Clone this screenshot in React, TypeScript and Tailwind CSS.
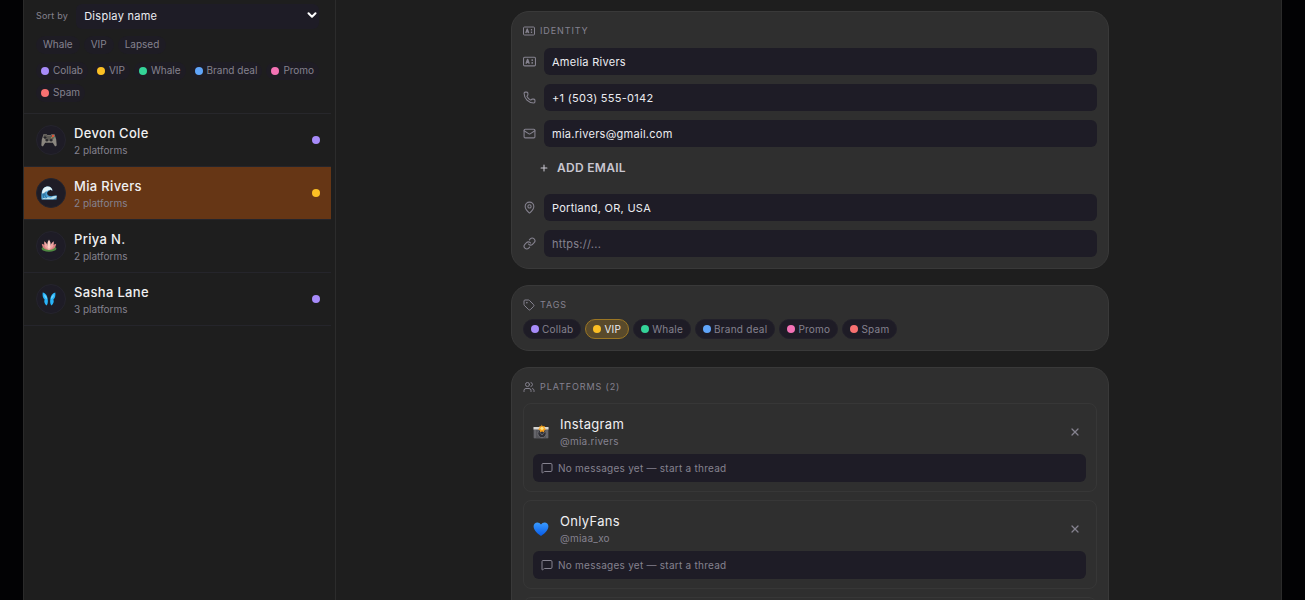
import type { ReactNode } from "react";
import clsx from "clsx";
import { ChevronDown, Link, Mail, MapPin, MessageSquare, Phone, Plus, Tag, Users, X } from "lucide-react";

const TAGS = [
  { name: "Collab", dot: "bg-[#a78bfa]" },
  { name: "VIP", dot: "bg-[#fbbf24]" },
  { name: "Whale", dot: "bg-[#34d399]" },
  { name: "Brand deal", dot: "bg-[#60a5fa]" },
  { name: "Promo", dot: "bg-[#f472b6]" },
  { name: "Spam", dot: "bg-[#f87171]" },
];

const CONTACTS = [
  { name: "Devon Cole", platforms: 2, icon: <GamepadIcon />, dot: "bg-[#a78bfa]" },
  { name: "Mia Rivers", platforms: 2, icon: <WaveIcon />, dot: "bg-[#fbbf24]", active: true },
  { name: "Priya N.", platforms: 2, icon: <LotusIcon /> },
  { name: "Sasha Lane", platforms: 3, icon: <ButterflyIcon />, dot: "bg-[#a78bfa]" },
];

const PLATFORMS = [
  { name: "Instagram", handle: "@mia.rivers", icon: <CameraIcon /> },
  { name: "OnlyFans", handle: "@miaa_xo", icon: <HeartIcon /> },
];

function GamepadIcon() {
  return (
    <svg viewBox="0 0 16 16" className="h-4 w-4" aria-hidden="true">
      <path d="M2.5 2.2h3l.8.8h3.4l.8-.8h3l1.7 5.3.5 6-1.6.9-2.3-3.7H4.2l-2.3 3.7-1.6-.9.5-6z" fill="#8a867f" />
      <path d="M3 2.4h2.7l.7 1.2h3.2l.7-1.2H13l.8 2-2.5 4H4.7l-2.5-4z" fill="#5c5954" />
      <path d="M4 4v3M2.5 5.5h3" stroke="#252429" strokeWidth="1" />
      <circle cx="12" cy="4" r="1.2" fill="#e15338" />
      <circle cx="13.2" cy="5.6" r=".7" fill="#4e9b70" />
      <circle cx="10.7" cy="5.6" r=".7" fill="#b58b45" />
      <circle cx="5.9" cy="8.2" r="1.3" fill="#29282c" />
      <circle cx="10.1" cy="8.2" r="1.3" fill="#29282c" />
    </svg>
  );
}

function WaveIcon() {
  return (
    <svg viewBox="0 0 16 16" className="h-4 w-4" aria-hidden="true">
      <path d="M.5 14.5C-.2 8 1 2.2 6 1.5c3.3-.4 5 1.6 5.5 4L9.3 4.7 7 6.4c-1.7 1.5-.8 4.2 2 4.7 2.3.4 4.6-1 6.6-.9v4.3z" fill="#4c9fd1" />
      <path d="M1 8.5C1.3 4.5 3 1.8 6 1.5c3.3-.4 5 1.6 5.5 4l-1.2-.2-1-.9-1.2 1.2-1-.5-.9 1.4-1.5-.3-.7 2z" fill="#e4f3f7" />
      <path d="M4.2 7.2c-1 2.2-.2 4.3 1.6 5.3M2.3 8.5c-.5 2 .1 4 1.3 5.2" stroke="#21648f" fill="none" />
      <path d="M1 14.3c1-1.5 2.5-1.8 4-.9 1.7-1.8 3.4-1.3 4.6-.6 1.7-1.4 3.6-1.8 6-1.8v1.3l-3.3 2z" fill="#b9dfec" />
    </svg>
  );
}

function LotusIcon() {
  return (
    <svg viewBox="0 0 16 16" className="h-4 w-4" aria-hidden="true">
      <ellipse cx="8" cy="10.7" rx="7.4" ry="3" fill="#4f8a42" />
      <path d="M.8 5.7c2.9.6 5.2 2.6 7.2 5.8 2-3.2 4.3-5.2 7.2-5.8-.5 4-2.8 6.2-7.2 6.2S1.3 9.7.8 5.7z" fill="#d88082" />
      <path d="M3.3 3.2c2.5 1.8 4 4.5 4.7 8.5.7-4 2.2-6.7 4.7-8.5.5 4.3-.8 7.2-4.7 8.7-3.9-1.5-5.2-4.4-4.7-8.7z" fill="#f0a4a2" />
      <path d="M8 1.5c2.3 3.3 2.3 7 0 10.4-2.3-3.4-2.3-7.1 0-10.4z" fill="#ffd0c7" />
    </svg>
  );
}

function ButterflyIcon() {
  return (
    <svg viewBox="0 0 16 16" className="h-4 w-4" aria-hidden="true">
      <path
        d="M6.8 9C6.5 4.5 4.5 2 1.7 1.5c-.4 3 .2 5.7 1.9 7.1-.9 2.3.1 4.7 1.9 5.9 1.2-1.2 1.5-3 1.3-5.5zM9.2 9c.3-4.5 2.3-7 5.1-7.5.4 3-.2 5.7-1.9 7.1.9 2.3-.1 4.7-1.9 5.9C9.3 13.3 9 11.5 9.2 9z"
        fill="#28b4fa"
      />
      <path d="M6.3 8C5.7 5.5 4.5 4 3 3.2 3.2 5.8 4.5 7.5 6.3 8zM9.7 8c.6-2.5 1.8-4 3.3-4.8-.2 2.6-1.5 4.3-3.3 4.8z" fill="#6bd5ff" />
      <path d="M8 5.5V12" stroke="#152333" strokeWidth="1" />
    </svg>
  );
}

function CameraIcon() {
  return (
    <svg viewBox="0 0 16 16" className="h-4 w-4" aria-hidden="true">
      <rect x=".5" y="3" width="15" height="11.5" rx="1" fill="#55555a" />
      <path d="M.5 3h15v2.5H.5z" fill="#d6d5d3" />
      <path d="M2 6v8M14 6v8" stroke="#77777b" />
      <circle cx="9" cy="9.5" r="4.2" fill="#303036" stroke="#6e6e73" />
      <path d="m7 8.3 2 2.7 2.5-3" stroke="#65656c" fill="none" />
      <path d="m8.5.5 1.2 1.8 2.1-.4-.4 2.1 1.8 1.2-1.9 1-.2 2.1-2-.8-1.9.8-.3-2.1L5 5.2 6.8 4l-.4-2.1 2 .4z" fill="#f59e1b" />
      <circle cx="9" cy="4.3" r="1.6" fill="#ffe27a" />
    </svg>
  );
}

function HeartIcon() {
  return (
    <svg viewBox="0 0 16 16" className="h-4 w-4" aria-hidden="true">
      <defs>
        <linearGradient id="heart" x2="0" y2="1">
          <stop stopColor="#3a9bff" />
          <stop offset="1" stopColor="#075be8" />
        </linearGradient>
      </defs>
      <path d="M8 15C3.5 12 .6 8.7.6 5.3c0-4.3 5.4-5.3 7.4-1.7 2-3.6 7.4-2.6 7.4 1.7C15.4 8.7 12.5 12 8 15z" fill="url(#heart)" />
    </svg>
  );
}

function IdCardIcon({ className }: { className: string }) {
  return (
    <svg viewBox="0 0 24 24" fill="none" stroke="currentColor" strokeWidth="2" strokeLinejoin="round" className={className} aria-hidden="true">
      <rect x="1" y="4" width="22" height="16" rx="2" />
      <path d="m5.5 16 3-8 3 8M7 13.5h3.5" strokeWidth="2.5" />
      <path d="M17 8v3M17 13v3" strokeWidth="2.5" />
    </svg>
  );
}

function Card({ icon, title, children }: { icon: ReactNode; title: string; children: ReactNode }) {
  return (
    <section className="rounded-[18px] border border-[#393939] bg-[#2f2f2f] p-[11px]">
      <h2 className="flex h-4 items-center gap-[5px] text-[9px] tracking-widest text-[#85828f] uppercase">
        {icon}
        {title}
      </h2>
      {children}
    </section>
  );
}

function Field({ icon, label, value, placeholder, type = "text" }: {
  icon: ReactNode;
  label: string;
  value?: string;
  placeholder?: string;
  type?: string;
}) {
  return (
    <label className="flex items-center gap-2 text-[#85828f]">
      {icon}
      <input
        type={type}
        aria-label={label}
        defaultValue={value}
        placeholder={placeholder}
        className="h-[27px] min-w-0 flex-1 rounded-md bg-[#1e1c26] px-2 text-[11px] tracking-wide text-[#ececf1] outline-none placeholder:text-[#85828f]"
      />
    </label>
  );
}

function Sidebar() {
  return (
    <aside className="w-[312px] shrink-0 border-r border-[#2c2c2c] pr-1">
      <div className="border-b border-[#27272b] pt-0.5 pr-2 pb-[11px] pl-3">
        <div className="flex items-center gap-2 pr-1">
          <label htmlFor="sort" className="text-[9px] tracking-wide text-[#85828f]">Sort by</label>
          <div className="relative flex-1">
            <select id="sort" className="h-[25px] w-full appearance-none rounded-md bg-[#1e1c26] px-2 text-[11px] tracking-wide text-[#ececf1] outline-none">
              <option>Display name</option>
            </select>
            <ChevronDown className="pointer-events-none absolute top-1.5 right-0 h-3.5 w-3.5 text-white" strokeWidth={3.5} />
          </div>
        </div>
        <div className="mt-[7px] flex gap-1">
          {["Whale", "VIP", "Lapsed"].map((segment) => (
            <button key={segment} type="button" className="h-[18px] rounded-full bg-[#1e1c24] px-[7px] text-[10px] text-[#85828f]">
              {segment}
            </button>
          ))}
        </div>
        <div className="mt-2 flex flex-wrap gap-1">
          {TAGS.map((tag) => (
            <button key={tag.name} type="button" className="flex h-[18px] items-center gap-1 rounded-full bg-[#1e1c24] px-[5px] text-[10px] text-[#85828f]">
              <span className={clsx("h-2 w-2 rounded-full", tag.dot)} />
              {tag.name}
            </button>
          ))}
        </div>
      </div>
      <ul>
        {CONTACTS.map((contact) => (
          <li key={contact.name} className="border-b border-[#25252b]">
            <button
              type="button"
              className={clsx("flex h-[52px] w-full items-center gap-2 pr-[11px] pl-3 text-left", contact.active && "bg-[#663615]")}
            >
              <span className="flex h-[30px] w-[30px] items-center justify-center rounded-full border border-[#25242d] bg-[#1e1c26] pr-1">
                {contact.icon}
              </span>
              <span className="flex-1 pt-0.5">
                <span className="block text-[13px] leading-[18px] font-medium tracking-wide text-[#f0f0f2]">{contact.name}</span>
                <span className="block text-[10px] leading-4 text-[#85828f]">{contact.platforms} platforms</span>
              </span>
              {contact.dot ? <span className={clsx("h-2 w-2 rounded-full", contact.dot)} /> : null}
            </button>
          </li>
        ))}
      </ul>
    </aside>
  );
}

export default function App() {
  const fieldIcon = "h-[13px] w-[13px] shrink-0";
  const titleIcon = "h-3 w-3 shrink-0";

  return (
    <div className="h-screen overflow-hidden bg-[#020204] px-[23px] font-['Inter',sans-serif]">
      <div className="flex min-h-full border-x border-[#2a2a2a] bg-[#1e1e1e]">
        <Sidebar />
        <main className="min-w-0 flex-1 pt-[11px] pl-[3px]">
          <div className="mx-auto flex max-w-[598px] flex-col gap-4">
            <Card icon={<IdCardIcon className={titleIcon} />} title="Identity">
              <div className="mt-[9px] flex flex-col gap-[9px]">
                <Field icon={<IdCardIcon className={fieldIcon} />} label="Name" value="Amelia Rivers" />
                <Field icon={<Phone className={fieldIcon} />} label="Phone" type="tel" value="+1 (503) 555-0142" />
                <Field icon={<Mail className={fieldIcon} />} label="Email" type="email" value="mia.rivers@gmail.com" />
                <button type="button" className="mb-[5px] ml-4 flex h-6 items-center gap-2 self-start text-[12px] font-semibold tracking-wide text-[#c9c7d1]">
                  <Plus className="h-2.5 w-2.5" strokeWidth={2.5} />
                  ADD EMAIL
                </button>
                <Field icon={<MapPin className={fieldIcon} />} label="Location" value="Portland, OR, USA" />
                <Field icon={<Link className={fieldIcon} />} label="Website" type="url" placeholder="https://..." />
              </div>
            </Card>

            <Card icon={<Tag className={titleIcon} />} title="Tags">
              <div className="mt-1.5 flex flex-wrap gap-1">
                {TAGS.map((tag) => (
                  <button
                    key={tag.name}
                    type="button"
                    className={clsx(
                      "flex h-5 items-center gap-[3px] rounded-full border px-[7px] text-[10px] tracking-wide",
                      tag.name === "VIP" ? "border-[#9b7624] bg-[#594a2b] text-[#ececf1]" : "border-[#22202a] bg-[#1e1c26] text-[#85828f]",
                    )}
                  >
                    <span className={clsx("h-2 w-2 rounded-full", tag.dot)} />
                    {tag.name}
                  </button>
                ))}
              </div>
            </Card>

            <Card icon={<Users className={titleIcon} />} title="Platforms (2)">
              <div className="mt-2 flex flex-col gap-2">
                {PLATFORMS.map((platform) => (
                  <article key={platform.name} className="rounded-lg border border-[#373737] pt-[10px] pr-[10px] pb-[9px] pl-[9px]">
                    <div className="flex items-center gap-[11px]">
                      {platform.icon}
                      <div className="flex-1 pb-0.5">
                        <h3 className="text-[13px] leading-5 tracking-wide text-[#f0f0f2]">{platform.name}</h3>
                        <p className="text-[10px] leading-[14px] tracking-wide text-[#85828f]">{platform.handle}</p>
                      </div>
                      <button type="button" aria-label={`Remove ${platform.name}`} className="p-[5px] text-[#85828f]">
                        <X className="h-3 w-3" strokeWidth={2.5} />
                      </button>
                    </div>
                    <button type="button" className="mt-1 flex h-7 w-full items-center gap-[5px] rounded-md bg-[#1e1c26] px-2 text-[10px] tracking-wide text-[#85828f]">
                      <MessageSquare className="h-3 w-3" />
                      No messages yet — start a thread
                    </button>
                  </article>
                ))}
                <div className="h-10 rounded-lg border border-[#373737]" />
              </div>
            </Card>
          </div>
        </main>
      </div>
    </div>
  );
}
